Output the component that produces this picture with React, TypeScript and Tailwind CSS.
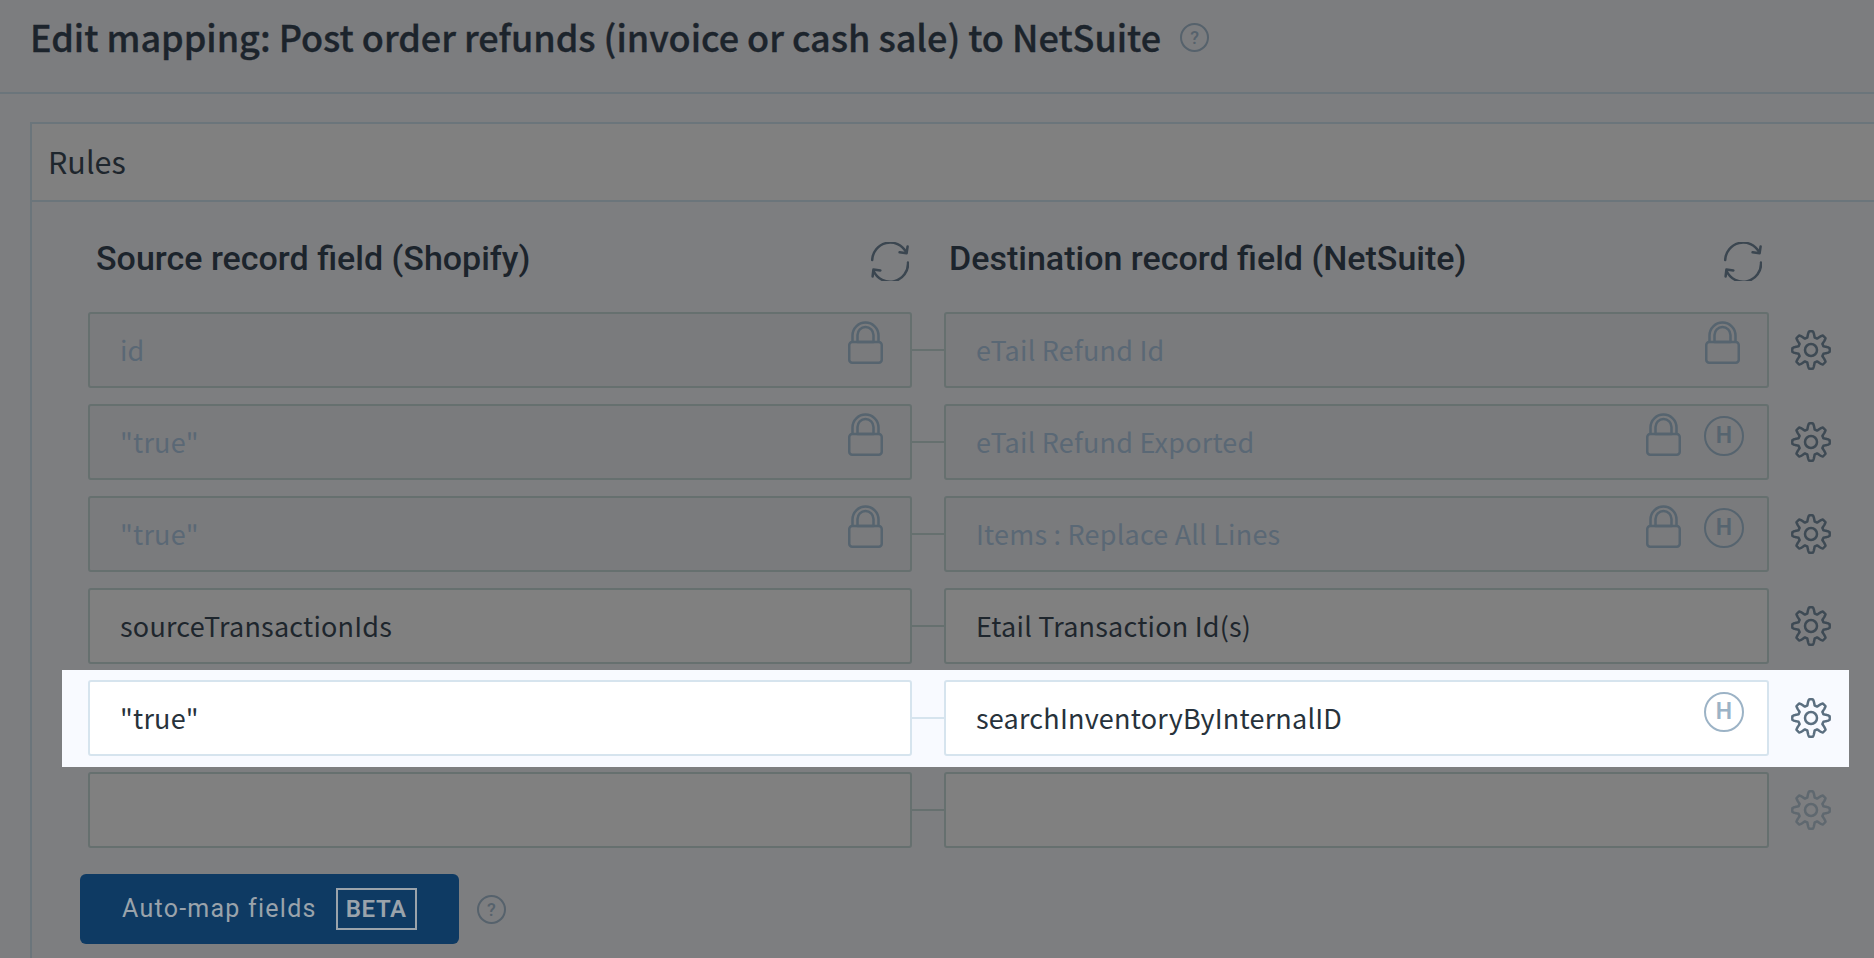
import React from "react";

const sans = "font-['Noto_Sans_CJK_SC','Noto_Sans',sans-serif]";
const rob = "font-['Roboto',sans-serif]";

function gearPath() {
  const pts: string[] = [];
  const n = 360;
  for (let i = 0; i <= n; i++) {
    const t = (i / n) * Math.PI * 2;
    const c = Math.max(-1, Math.min(1, 1.5 * Math.cos(8 * t)));
    const r = 15.8 + 2.9 * c;
    const x = 20 + r * Math.sin(t);
    const y = 20 - r * Math.cos(t);
    pts.push(`${i === 0 ? "M" : "L"}${x.toFixed(2)} ${y.toFixed(2)}`);
  }
  return pts.join(" ") + " Z";
}

function Gear({ color }: { color: string }) {
  return (
    <svg width="40" height="40" viewBox="0 0 40 40" fill="none" stroke={color} strokeWidth="2.5" strokeLinejoin="round">
      <path d={gearPath()} />
      <circle cx="20" cy="20" r="6" />
    </svg>
  );
}

function Lock() {
  return (
    <svg width="35" height="43" viewBox="0 0 35 43" fill="none" stroke="#56646f" strokeWidth="2.5" strokeLinejoin="round" className="shrink-0">
      <rect x="1.25" y="21" width="32.5" height="20.75" rx="3" />
      <path d="M4.5 21V14.5a13 13 0 0 1 26 0V21" />
      <path d="M9.5 21V14a8 8 0 0 1 16 0V21Z" />
    </svg>
  );
}

function Sync() {
  return (
    <svg width="38" height="39" viewBox="0 0 38 39" fill="none" stroke="#3b4650" strokeWidth="2.5" strokeLinecap="round" strokeLinejoin="round" className="shrink-0">
      <path d="M1.2 18A18 18 0 0 1 35 10" />
      <path d="M36.6 4.5L35.6 11.3L28.6 10.3" />
      <path d="M37 20.5A18 18 0 0 1 2.6 29" />
      <path d="M1.6 34.5L2.4 27.6L9.4 28.4" />
    </svg>
  );
}

function HBadge({ color }: { color: string }) {
  return (
    <span
      className={`${rob} w-10 h-10 shrink-0 rounded-full border-[2.5px] flex items-center justify-center text-[23px] font-semibold`}
      style={{ borderColor: color, color }}
    >
      H
    </span>
  );
}

function Help() {
  return (
    <span className={`${rob} w-[29px] h-[29px] rounded-full border-[2px] border-[#56626c] text-[#56626c] flex items-center justify-center text-[18px] font-medium`}>
      ?
    </span>
  );
}

type Field = { text: string; lock?: boolean; h?: boolean };
type Row = { a: Field; b: Field; kind: "locked" | "plain" | "active" | "empty" };

const rows: Row[] = [
  { a: { text: "id", lock: true }, b: { text: "eTail Refund Id", lock: true }, kind: "locked" },
  { a: { text: '"true"', lock: true }, b: { text: "eTail Refund Exported", lock: true, h: true }, kind: "locked" },
  { a: { text: '"true"', lock: true }, b: { text: "Items : Replace All Lines", lock: true, h: true }, kind: "locked" },
  { a: { text: "sourceTransactionIds" }, b: { text: "Etail Transaction Id(s)" }, kind: "plain" },
  { a: { text: '"true"' }, b: { text: "searchInventoryByInternalID", h: true }, kind: "active" },
  { a: { text: "" }, b: { text: "" }, kind: "empty" },
];

function Input({ f, kind, w }: { f: Field; kind: Row["kind"]; w: string }) {
  const box =
    kind === "active"
      ? "bg-white border-[#d6e4ee] text-[#27323b]"
      : kind === "locked"
        ? "bg-[#7a7b7d] border-[#66706f] text-[#5a6875]"
        : "bg-[#808080] border-[#66706f] text-[#1e262d]";
  return (
    <div className={`${w} ${box} ${sans} h-[76px] shrink-0 border-2 rounded-[3px] flex items-start pl-[30px] relative`}>
      <span className="text-[27px] leading-[76px] tracking-[0.2px] -mt-[2px]">{f.text}</span>
      <div className="ml-auto flex items-start gap-[23px] pr-[27px] pt-[7px]">
        {f.lock && <Lock />}
        {f.h && (
          <span className="-mr-[4px] pt-[3px]">
            <HBadge color={kind === "active" ? "#9cb3c6" : "#56646f"} />
          </span>
        )}
      </div>
    </div>
  );
}

function RuleRow({ r }: { r: Row }) {
  const active = r.kind === "active";
  return (
    <div className={`flex items-center w-[1787px] pl-[26px] ${active ? "bg-[#f8faff] -mt-[10px] pt-[10px] pb-[11px] mb-[5px] relative" : "mb-[16px] last:mb-0"}`}>
      <Input f={r.a} kind={r.kind} w="w-[824px]" />
      <div className={`w-[32px] h-[2px] shrink-0 ${active ? "bg-[#d6e4ee]" : "bg-[#66706f]"}`} />
      <Input f={r.b} kind={r.kind} w="w-[825px]" />
      <div className="ml-[22px]">
        <Gear color={active ? "#5b6f80" : r.kind === "empty" ? "#5f686f" : "#3e4a54"} />
      </div>
    </div>
  );
}

export default function App() {
  return (
    <div className="w-[1874px] h-[958px] overflow-hidden bg-[#7d7e80]">
      <header className="h-[94px] border-b-2 border-[#6b757b] bg-[#7c7d7f] flex items-center pl-[30px] pb-[17px] gap-[19px]">
        <h1 className={`${sans} text-[36px] font-medium text-[#1c242c] [-webkit-text-stroke:0.35px_#1c242c] tracking-[-0.03px] leading-none pb-[3px]`}>
          Edit mapping: Post order refunds (invoice or cash sale) to NetSuite
        </h1>
        <Help />
      </header>
      <section className="ml-[30px] mt-[28px] w-[1900px] border-2 border-[#6b757b]">
        <div className={`${sans} h-[78px] bg-[#808080] border-b-2 border-[#6b757b] flex items-center pl-[16px] text-[30.5px] text-[#1e262d]`}>
          Rules
        </div>
        <div className="pl-[30px] pt-[23px] pb-[40px]">
          <div className="flex items-center w-[1787px] h-[72px] mb-[15px]">
            <div className="ml-[34px] w-[813px] flex items-center justify-between">
              <span className={`${rob} text-[34px] font-medium text-[#1c242c] -mt-[6px]`}>Source record field (Shopify)</span>
              <Sync />
            </div>
            <div className="ml-[40px] w-[821px] flex items-center justify-between">
              <span className={`${rob} text-[34px] font-medium text-[#1c242c] -mt-[6px]`}>Destination record field (NetSuite)</span>
              <span className="mr-[8px]"><Sync /></span>
            </div>
          </div>
          {rows.map((r, i) => (
            <RuleRow key={i} r={r} />
          ))}
          <div className="flex items-center mt-[26px] ml-[18px] gap-[18px]">
            <button className={`${rob} w-[379px] h-[70px] rounded-[6px] bg-[#0e3a63] text-[#9aa3ab] flex items-center pl-[42px] text-[25px] tracking-[1.25px]`}>
              Auto-map fields
              <span className="ml-[19px] w-[81px] h-[42px] border-2 border-[#9aa3ab] flex items-center justify-center text-[24px] font-semibold tracking-[0.6px]">BETA</span>
            </button>
            <Help />
          </div>
        </div>
      </section>
    </div>
  );
}
